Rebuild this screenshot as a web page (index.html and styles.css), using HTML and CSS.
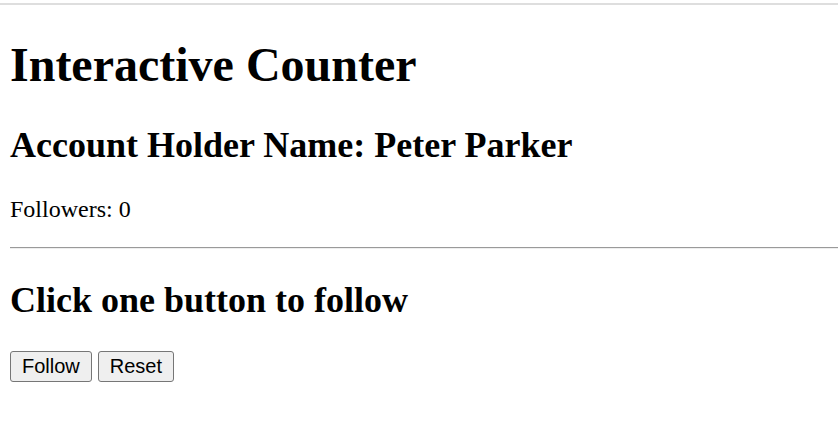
FILE: index.html
```html
<!DOCTYPE html>
<html>
<head>
<meta charset="utf-8">
<link rel="stylesheet" href="styles.css">
</head>
<body>
<div class="topbar"></div>
<div class="page">
  <h1 class="title">Interactive Counter</h1>
  <h2 class="sub">Account Holder Name: Peter Parker</h2>
  <p class="text">Followers: 0</p>
  <hr class="rule">
  <h2 class="sub">Click one button to follow</h2>
  <p class="text"><button class="btn">Follow</button> <button class="btn">Reset</button></p>
</div>
</body>
</html>
```
FILE: styles.css
```css
html, body {
  margin: 0;
  padding: 0;
  background: #fff;
}
body {
  font-family: "Liberation Serif", "Times New Roman", serif;
  font-size: 24px;
  color: #000;
}
.topbar {
  margin-top: 3px;
  height: 2px;
  background: #dedede;
}
.page {
  padding-left: 10px;
  display: flow-root;
}
.title {
  font-size: 48px;
  font-weight: bold;
  margin: 32px 0;
}
.sub {
  font-size: 36px;
  font-weight: bold;
  margin: 30px 0;
}
.text {
  margin: 24px 0;
}
.rule {
  margin: 24px 0 12px;
  border: 0;
  border-top: 1px solid #9a9a9a;
  border-bottom: 1px solid #eeeeee;
  height: 0;
}
.btn {
  font-family: "Liberation Sans", Arial, sans-serif;
  font-size: 20px;
  line-height: 23px;
  padding: 3px 11px;
  border: 1px solid #767676;
  border-radius: 3px;
  background: #efefef;
  color: #000;
  margin: 0;
}
```
